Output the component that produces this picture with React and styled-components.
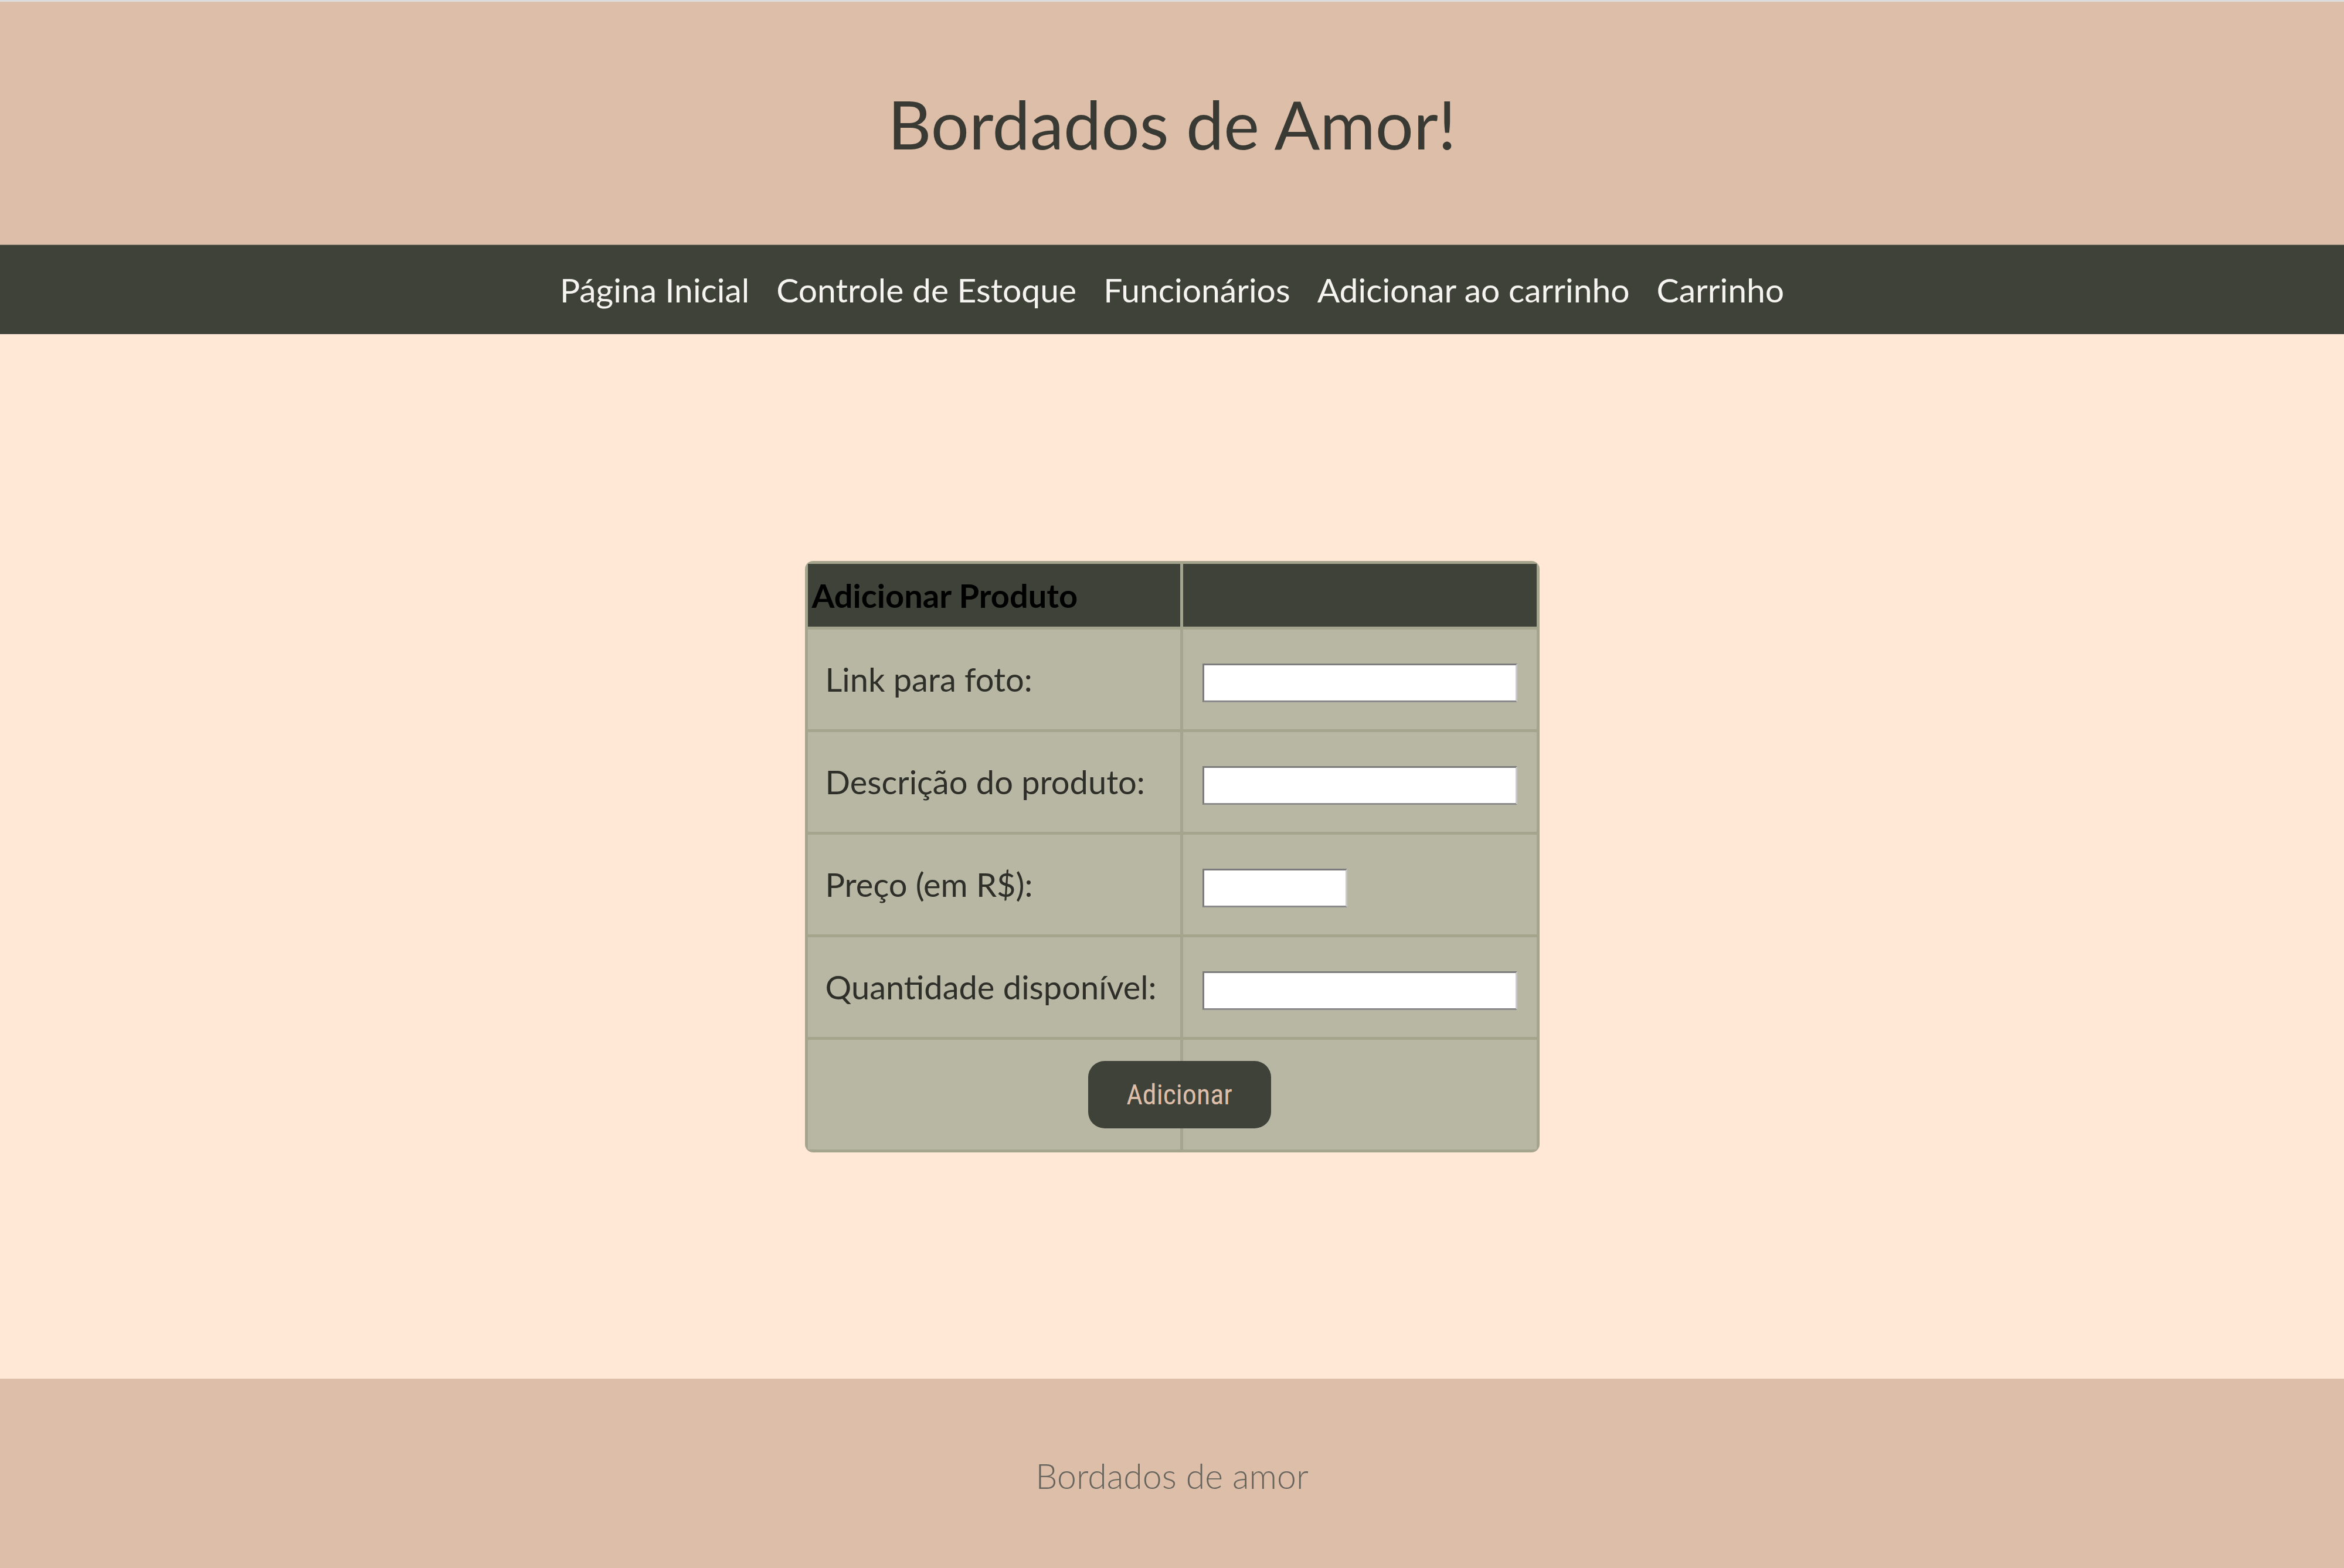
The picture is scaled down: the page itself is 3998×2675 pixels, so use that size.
import React from "react";
import styled, { createGlobalStyle } from "styled-components";

const GlobalStyle = createGlobalStyle`
  html, body {
    margin: 0;
    padding: 0;
  }
  body {
    background-color: #ffe8d6;
    font-family: Lato, "Open Sans", sans-serif;
    border-top: 3px solid #dcdcdc;
  }
`;

const Page = styled.div`
  display: flex;
  flex-direction: column;
  height: calc(100vh - 3px);
`;

const Header = styled.header`
  height: 414px;
  background-color: #ddbea9;
  border-bottom: 1px solid #a89888;
  display: flex;
  align-items: center;
  justify-content: center;
  h1 {
    margin: 0;
    font-size: 115px;
    font-weight: 400;
    color: #3a3a35;
  }
`;

const Nav = styled.nav`
  height: 152px;
  background-color: #3f4238;
  display: flex;
  align-items: center;
  justify-content: center;
  gap: 46px;
  a {
    color: #f6f4f0;
    text-decoration: none;
    font-size: 57px;
  }
`;

const Main = styled.main`
  flex: 1;
  display: flex;
  align-items: center;
  justify-content: center;
  form {
    margin: 0;
  }
`;

const FormTable = styled.table`
  width: 1253px;
  background-color: #a5a58d;
  border-spacing: 5px;
  border-radius: 14px;
  th {
    height: 107px;
    box-sizing: border-box;
    background-color: #3f4238;
    color: #000;
    text-align: left;
    padding: 0 0 0 7px;
    font-size: 56px;
    font-weight: 700;
  }
  td {
    box-sizing: border-box;
    height: 170px;
    background-color: #b7b7a4;
    padding: 0;
  }
`;

const Label = styled.td`
  width: 635px;
  padding-left: 30px !important;
  font-size: 56px;
  color: #2f2f2a;
`;

const InputCell = styled.td`
  padding: 0 33px !important;
`;

const TextInput = styled.input`
  box-sizing: border-box;
  display: block;
  margin-top: 12px;
  width: ${(p) => (p.$short ? "247px" : "100%")};
  height: 66px;
  background: #fff;
  border: 3px solid;
  border-color: #7c7c7c #c9c9c9 #8a8a8a #7c7c7c;
`;

const ButtonCell = styled.td`
  height: 187px !important;
  text-align: ${(p) => p.$align || "left"};
`;

const AddButton = styled.button`
  width: 312px;
  height: 115px;
  margin-right: -155px;
  background-color: #3f4238;
  color: #ddbea9;
  border: none;
  border-radius: 28px;
  font-family: "Liberation Sans Narrow", "Roboto Condensed", Roboto, sans-serif;
  font-size: 48px;
`;

const Footer = styled.footer`
  height: 323px;
  background-color: #ddbea9;
  display: flex;
  align-items: center;
  justify-content: center;
  p {
    margin: 8px 0 0 0;
    font-size: 59px;
    font-weight: 300;
    color: #67645d;
  }
`;

const fields = [
  { label: "Link para foto:", name: "foto" },
  { label: "Descrição do produto:", name: "descricao" },
  { label: "Preço (em R$):", name: "preco", short: true },
  { label: "Quantidade disponível:", name: "quantidade" },
];

const links = [
  "Página Inicial",
  "Controle de Estoque",
  "Funcionários",
  "Adicionar ao carrinho",
  "Carrinho",
];

export default function App() {
  return (
    <>
      <GlobalStyle />
      <Page>
        <Header>
          <h1>Bordados de Amor!</h1>
        </Header>
        <Nav>
          {links.map((l) => (
            <a key={l} href="#">
              {l}
            </a>
          ))}
        </Nav>
        <Main>
          <form onSubmit={(e) => e.preventDefault()}>
            <FormTable>
              <thead>
                <tr>
                  <th>Adicionar Produto</th>
                  <th></th>
                </tr>
              </thead>
              <tbody>
                {fields.map((f) => (
                  <tr key={f.name}>
                    <Label>{f.label}</Label>
                    <InputCell>
                      <TextInput type="text" name={f.name} $short={f.short} />
                    </InputCell>
                  </tr>
                ))}
                <tr>
                  <ButtonCell $align="right">
                    <AddButton type="submit">Adicionar</AddButton>
                  </ButtonCell>
                  <ButtonCell></ButtonCell>
                </tr>
              </tbody>
            </FormTable>
          </form>
        </Main>
        <Footer>
          <p>Bordados de amor</p>
        </Footer>
      </Page>
    </>
  );
}
